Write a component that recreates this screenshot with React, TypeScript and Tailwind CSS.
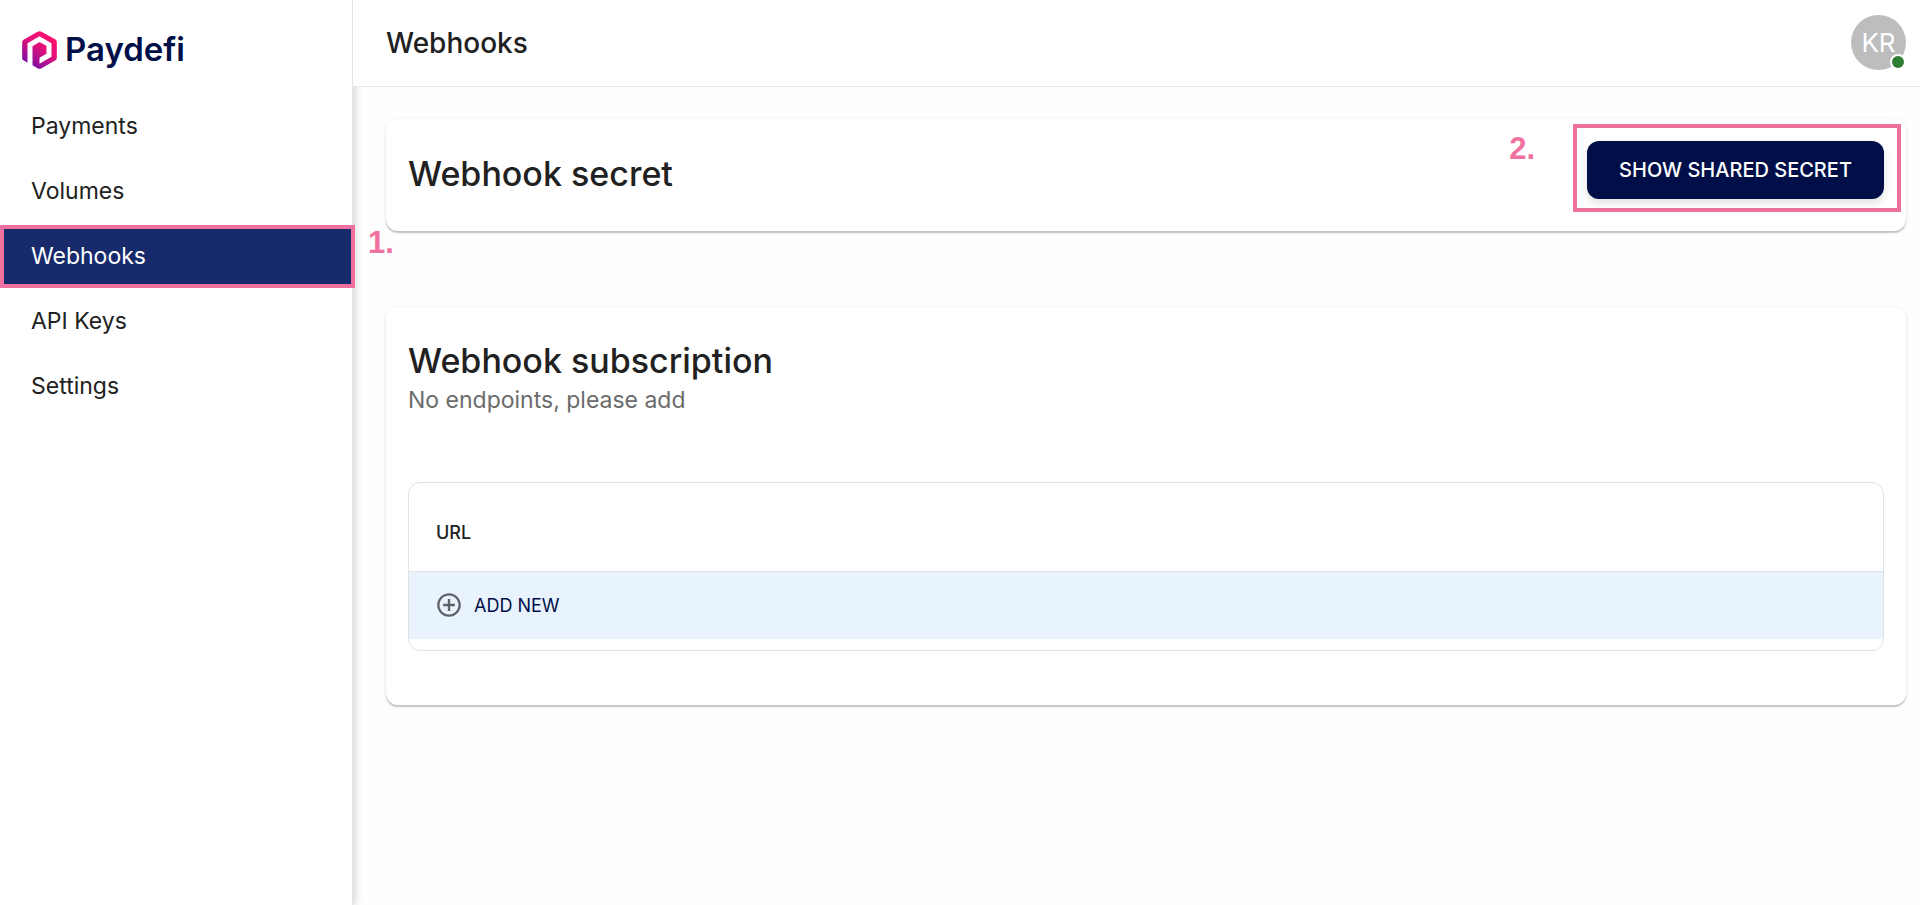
const navItems = ["Payments", "Volumes", "Webhooks", "API Keys", "Settings"];
const activeItem = "Webhooks";

function LogoMark() {
  return (
    <svg className="h-[38px] w-[35px]" viewBox="0 0 104 114" aria-hidden="true">
      <defs>
        <linearGradient id="mark" x1="80" y1="8" x2="14" y2="112" gradientUnits="userSpaceOnUse">
          <stop offset="0" stopColor="#ff1070" />
          <stop offset="0.4" stopColor="#e0127a" />
          <stop offset="1" stopColor="#6a0fae" />
        </linearGradient>
      </defs>
      <path
        fill="url(#mark)"
        d="M0 82V34Q0 29 4 26L46 2Q52 -1 58 2L99 25Q104 28 104 33V80Q104 85 100 88L58 112Q52 115 46 112L31 103V46L48 35Q52 33 56 35L73 45V68L52 80V98L88 77V37L52 16L16 37V95L4 88Q0 86 0 82Z"
      />
    </svg>
  );
}

function Sidebar() {
  return (
    <aside className="relative z-10 w-[353px] shrink-0 border-r border-[#e4e4e4] bg-white shadow-[2px_0_8px_rgba(0,0,0,0.18)]">
      <a href="#" className="flex h-[98px] items-center gap-2 pt-px pl-[22px] text-[#000f48]">
        <LogoMark />
        <span className="text-[33px] leading-none font-semibold">Paydefi</span>
      </a>
      <nav>
        <ul className="flex flex-col gap-2">
          {navItems.map((item) => (
            <li key={item} className="relative">
              <a
                href="#"
                aria-current={item === activeItem ? "page" : undefined}
                className={
                  item === activeItem
                    ? "flex h-[57px] items-center bg-[#172a6b] pl-[31px] text-[23px] text-white"
                    : "flex h-[57px] items-center pl-[31px] text-[23px] text-[#212121]"
                }
              >
                {item}
              </a>
              {item === activeItem && (
                <>
                  <span className="pointer-events-none absolute -top-[3px] -right-[3px] -bottom-[3px] left-0 border-4 border-[#f0709f]" />
                  <Step className="absolute top-px left-full ml-4">1.</Step>
                </>
              )}
            </li>
          ))}
        </ul>
      </nav>
    </aside>
  );
}

function Step({ className, children }: { className: string; children: string }) {
  return (
    <span
      className={`font-['Liberation_Sans',Arial,sans-serif] text-[31px] leading-7 font-bold text-[#f0709f] ${className}`}
    >
      {children}
    </span>
  );
}

function Header() {
  return (
    <header className="relative z-20 flex h-[87px] items-center justify-between border-b border-[#e8e8e8] bg-white pr-[14px] pb-px pl-[33px]">
      <h1 className="text-[28px] font-medium">Webhooks</h1>
      <button type="button" className="relative flex size-[55px] items-center justify-center rounded-full bg-[#bdbdbd] text-[26px] text-white">
        KR
        <span className="absolute right-0 bottom-0 size-4 rounded-full border-2 border-white bg-[#2e7d32]" />
      </button>
    </header>
  );
}

const cardClass =
  "rounded-xl bg-white px-[22px] shadow-[0_2px_1px_rgba(20,20,50,0.2),0_1px_4px_rgba(20,20,50,0.1)]";

export default function App() {
  return (
    <div className="flex min-h-screen bg-[#fefefe] font-[Inter,sans-serif] text-[#212121]">
      <Sidebar />
      <div className="z-10 flex min-w-0 flex-1 flex-col">
        <Header />
        <main className="flex flex-col gap-[76px] pt-8 pr-[14px] pl-[33px]">
          <section className={`flex items-start justify-between pt-[22px] pb-6 ${cardClass}`}>
            <h2 className="text-[34px] leading-[66px] font-medium">Webhook secret</h2>
            <div className="relative">
              <button
                type="button"
                className="h-[58px] w-[297px] rounded-xl bg-[#000f48] text-[20px] font-medium text-white shadow-[0_4px_8px_rgba(0,0,0,0.12)]"
              >
                SHOW SHARED SECRET
              </button>
              <span className="pointer-events-none absolute -top-[17px] -right-[17px] -bottom-[13px] -left-[14px] border-4 border-[#f0709f]" />
              <Step className="absolute -top-1.5 right-full mr-[52px]">2.</Step>
            </div>
          </section>

          <section className={`pt-8 pb-[54px] ${cardClass}`}>
            <h2 className="text-[34px] leading-[44px] font-medium">Webhook subscription</h2>
            <p className="text-[23px] leading-[34px] text-[#6b6b6b]">No endpoints, please add</p>
            <div className="mt-[65px] overflow-hidden rounded-xl border border-[#e2e2e2] pb-[11px]">
              <table className="w-full">
                <thead>
                  <tr className="h-[88px] border-b border-[#dfe1e4]">
                    <th scope="col" className="pt-3 pl-[27px] text-left text-[18px] font-medium">
                      URL
                    </th>
                  </tr>
                </thead>
                <tbody>
                  <tr className="h-[68px] bg-[#e8f3fe]">
                    <td className="pl-[27px]">
                      <button type="button" className="flex items-center gap-3 text-[18px] text-[#000f48]">
                        <svg className="size-[26px] fill-[#5f6368]" viewBox="1 1 22 22" aria-hidden="true">
                          <path d="M13 7h-2v4H7v2h4v4h2v-4h4v-2h-4V7zm-1-5C6.48 2 2 6.48 2 12s4.48 10 10 10 10-4.48 10-10S17.52 2 12 2zm0 18c-4.41 0-8-3.590-8-8s3.590-8 8-8 8 3.590 8 8-3.590 8-8 8z" />
                        </svg>
                        ADD NEW
                      </button>
                    </td>
                  </tr>
                </tbody>
              </table>
            </div>
          </section>
        </main>
      </div>
    </div>
  );
}
